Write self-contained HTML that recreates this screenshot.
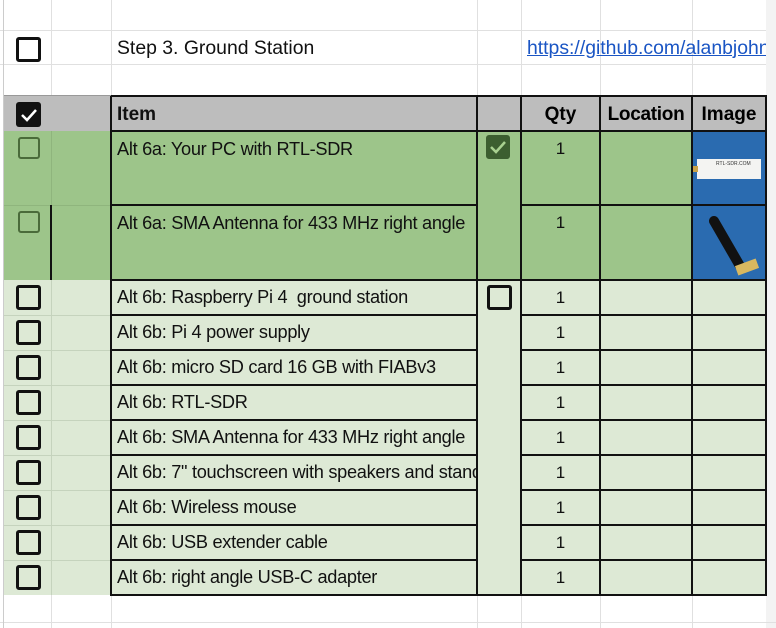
<!DOCTYPE html>
<html><head><meta charset="utf-8"><style>
*{margin:0;padding:0;box-sizing:border-box}
body{width:776px;height:628px;background:#fff;position:relative;overflow:hidden;font-family:"Liberation Sans",Arial,sans-serif}
.a{position:absolute}
.hl{position:absolute;height:1px}
.vl{position:absolute;width:1px}
.t{position:absolute;font-size:18.2px;color:#111;white-space:nowrap;letter-spacing:-0.3px}
.cb{position:absolute;width:22px;height:22px;border:3px solid #111;border-radius:3px}
.cbg{position:absolute;width:22px;height:22px;border:2px solid #4a6b3a;border-radius:3px}
.q{position:absolute;font-size:17px;color:#111;width:79px;text-align:center}
</style></head><body>
<div class="a" style="left:766px;top:0;width:10px;height:628px;background:#f3f3f3"></div>
<div class="hl" style="left:0;top:30px;width:766px;background:#e0e0e0"></div>
<div class="hl" style="left:0;top:64px;width:766px;background:#e0e0e0"></div>
<div class="hl" style="left:0;top:622px;width:776px;background:#e0e0e0"></div>
<div class="vl" style="left:3px;top:0;height:628px;background:#ccc"></div>
<div class="vl" style="left:51px;top:0;height:628px;background:#e0e0e0"></div>
<div class="vl" style="left:111px;top:0;height:628px;background:#e0e0e0"></div>
<div class="vl" style="left:477px;top:0;height:628px;background:#e0e0e0"></div>
<div class="vl" style="left:521px;top:0;height:628px;background:#e0e0e0"></div>
<div class="vl" style="left:600px;top:0;height:628px;background:#e0e0e0"></div>
<div class="vl" style="left:692px;top:0;height:628px;background:#e0e0e0"></div>

<div class="cb" style="left:16px;top:37px;width:25px;height:25px"></div>
<div class="a" style="left:117px;top:37px;font-size:19.4px;color:#111">Step 3. Ground Station</div>
<div class="a" style="left:527px;top:37px;width:239px;overflow:hidden;white-space:nowrap;font-size:19.4px;color:#1a55c4;text-decoration:underline">https://github.com/alanbjohnston</div>

<div class="a" style="left:4px;top:96px;width:762px;height:35px;background:#bdbdbd"></div>
<div class="a" style="left:16px;top:102px;width:25px;height:25px;background:#111;border-radius:3px"></div>
<svg class="a" style="left:16px;top:102px" width="25" height="25"><path d="M6 13l5 5 9-10" stroke="#fff" stroke-width="2.5" fill="none"/></svg>
<div class="a" style="left:117px;top:104px;font-size:19px;font-weight:bold;color:#111">Item</div>
<div class="a" style="left:521px;top:104px;width:79px;text-align:center;font-size:19px;font-weight:bold">Qty</div>
<div class="a" style="left:600px;top:104px;width:92px;text-align:center;font-size:19px;font-weight:bold;letter-spacing:-0.3px">Location</div>
<div class="a" style="left:692px;top:104px;width:74px;text-align:center;font-size:19px;font-weight:bold">Image</div>

<div class="a" style="left:4px;top:131px;width:688px;height:149px;background:#9dc58a"></div>
<div class="vl" style="left:51px;top:131px;height:74px;background:#8fb57d"></div>
<div class="hl" style="left:4px;top:205px;width:107px;background:#8fb57d"></div>
<div class="cbg" style="left:18px;top:137px"></div>
<div class="cbg" style="left:18px;top:211px"></div>
<div class="t" style="left:117px;top:139px">Alt 6a: Your PC with RTL-SDR</div>
<div class="t" style="left:117px;top:213px;width:359px;overflow:hidden">Alt 6a: SMA Antenna for 433 MHz right angle</div>
<div class="a" style="left:486px;top:135px;width:24px;height:24px;background:#3c5e30;border-radius:3px"></div>
<svg class="a" style="left:486px;top:135px" width="24" height="24"><path d="M5 12l5 5 9-10" stroke="#a8d090" stroke-width="2.5" fill="none"/></svg>
<div class="q" style="left:521px;top:139px">1</div>
<div class="q" style="left:521px;top:213px">1</div>
<div class="a" style="left:692px;top:131px;width:74px;height:149px;background:#2a6bb0"></div>
<div class="a" style="left:697px;top:159px;width:64px;height:20px;background:#f4f4f2"></div>
<div class="a" style="left:692px;top:166px;width:6px;height:6px;background:#c9a44a"></div>
<div class="a" style="left:716px;top:161px;font-size:5px;color:#333">RTL-SDR.COM</div>
<svg class="a" style="left:692px;top:206px" width="74" height="74"><path d="M22 15 L48 60" stroke="#111" stroke-width="10" stroke-linecap="round"/><rect x="44" y="56" width="22" height="10" fill="#d8b860" transform="rotate(-20 55 61)"/></svg>

<div class="a" style="left:4px;top:280px;width:688px;height:315px;background:#dde9d5"></div>
<div class="a" style="left:692px;top:280px;width:74px;height:315px;background:#dde9d5"></div>

<div class="a" style="left:110px;top:96px;width:2px;height:500px;background:#111"></div>
<div class="a" style="left:476px;top:96px;width:2px;height:500px;background:#111"></div>
<div class="a" style="left:520px;top:96px;width:2px;height:500px;background:#111"></div>
<div class="a" style="left:599px;top:96px;width:2px;height:500px;background:#111"></div>
<div class="a" style="left:691px;top:96px;width:2px;height:500px;background:#111"></div>
<div class="a" style="left:765px;top:96px;width:2px;height:500px;background:#111"></div>
<div class="a" style="left:50px;top:205px;width:2px;height:75px;background:#111"></div>
<div class="a" style="left:110px;top:95px;width:657px;height:2px;background:#111"></div>
<div class="a" style="left:4px;top:95px;width:107px;height:1px;background:#999"></div>
<div class="a" style="left:110px;top:130px;width:657px;height:2px;background:#111"></div>
<div class="a" style="left:110px;top:204px;width:367px;height:2px;background:#111"></div>
<div class="a" style="left:520px;top:204px;width:247px;height:2px;background:#111"></div>
<div class="a" style="left:110px;top:279px;width:657px;height:2px;background:#111"></div>
<div class="a" style="left:110px;top:594px;width:657px;height:2px;background:#111"></div>
<div id="rows"></div>

<div class="t" style="left:117px;top:287px">Alt 6b: Raspberry Pi 4&nbsp; ground station</div>
<div class="t" style="left:117px;top:322px">Alt 6b: Pi 4 power supply</div>
<div class="t" style="left:117px;top:357px">Alt 6b: micro SD card 16 GB with FIABv3</div>
<div class="t" style="left:117px;top:392px">Alt 6b: RTL-SDR</div>
<div class="t" style="left:117px;top:427px;width:359px;overflow:hidden">Alt 6b: SMA Antenna for 433 MHz right angle</div>
<div class="t" style="left:117px;top:462px;width:359px;overflow:hidden">Alt 6b: 7" touchscreen with speakers and stand</div>
<div class="t" style="left:117px;top:497px">Alt 6b: Wireless mouse</div>
<div class="t" style="left:117px;top:532px">Alt 6b: USB extender cable</div>
<div class="t" style="left:117px;top:567px">Alt 6b: right angle USB-C adapter</div>
<div class="cb" style="left:487px;top:285px;width:25px;height:25px"></div>

<script>
var h='';
for(var i=0;i<9;i++){var y=280+i*35;
h+='<div class="cb" style="left:16px;top:'+(y+5)+'px;width:25px;height:25px"></div>';
h+='<div class="q" style="left:521px;top:'+(y+8)+'px">1</div>';
if(i>0){h+='<div class="a" style="left:110px;top:'+(y-1)+'px;width:367px;height:2px;background:#111"></div>';
h+='<div class="a" style="left:520px;top:'+(y-1)+'px;width:247px;height:2px;background:#111"></div>';
h+='<div class="a" style="left:4px;top:'+y+'px;width:106px;height:1px;background:#c5d3bd"></div>';}
}
h+='<div class="vl" style="left:51px;top:280px;height:315px;background:#c5d3bd"></div>';
document.getElementById('rows').innerHTML=h;
</script>
</body></html>
